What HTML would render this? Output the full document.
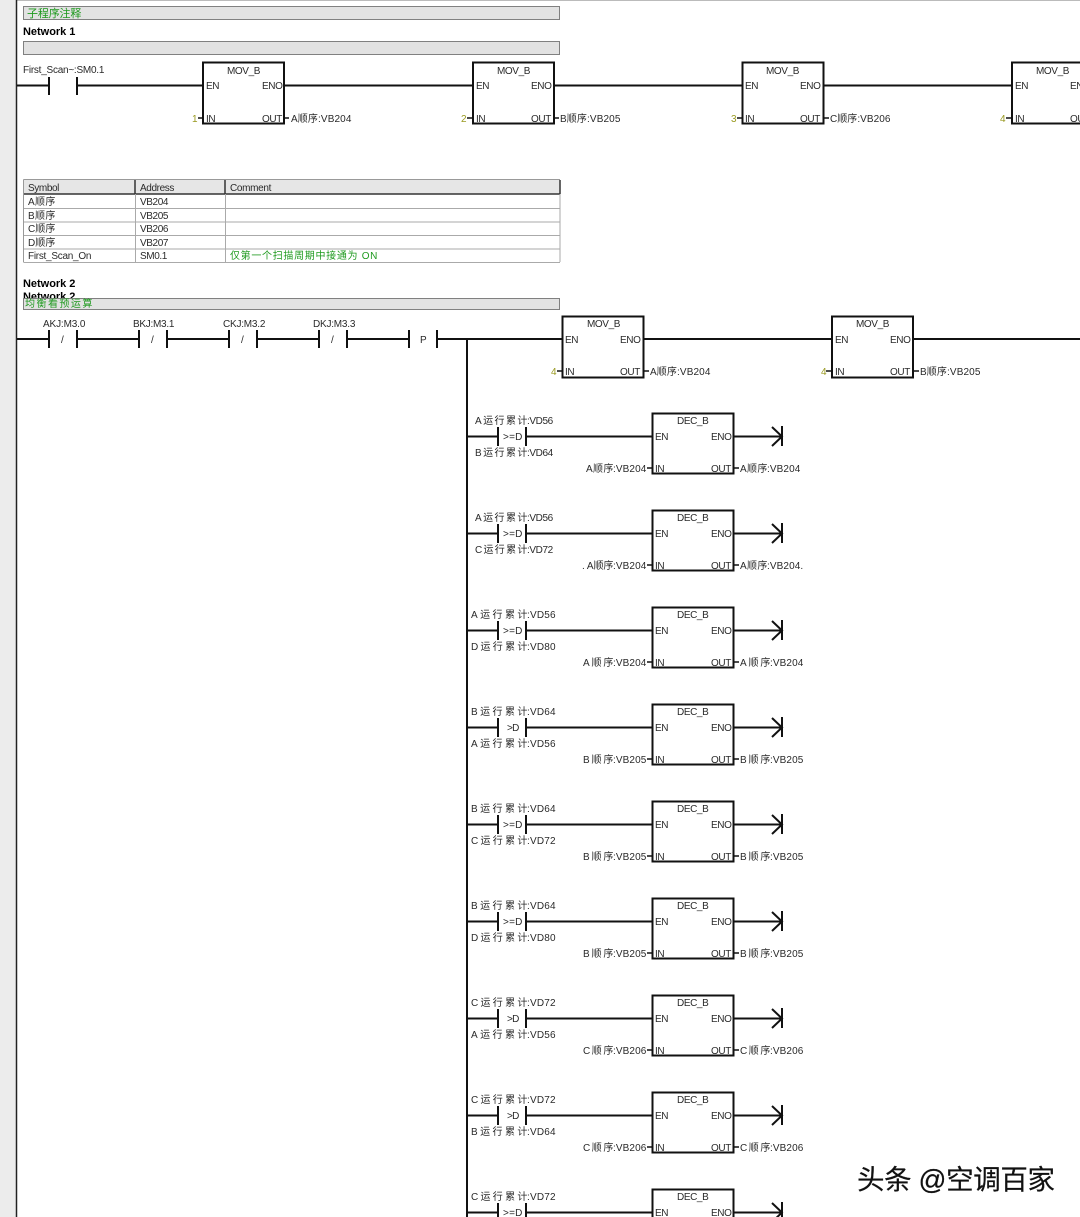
<!DOCTYPE html>
<html><head><meta charset="utf-8"><style>
html,body{margin:0;padding:0;background:#fff;width:1080px;height:1217px;overflow:hidden}
svg{display:block;filter:blur(.35px)}
text{font-family:"Liberation Sans","Noto Sans CJK SC",sans-serif;font-size:10px;fill:#2a2a2a;letter-spacing:-.4px}
text[x="471"] tspan+tspan{letter-spacing:.2px}
tspan[x="613"],tspan[x="767"],tspan[x="770"]{letter-spacing:.1px}
.g{fill:#1f9a1f}.o{fill:#99991f}.b{font-weight:bold;font-size:11px;fill:#000}
.l{stroke:#111;stroke-width:2;fill:none}.t{stroke:#111;stroke-width:1.5;fill:none}
.bar{fill:#e2e2e2;stroke:#808080;stroke-width:1}
.wm{font-size:27.5px;fill:#111;stroke:#111;stroke-width:.2px;letter-spacing:0}
</style></head><body>
<svg width="1080" height="1217" viewBox="0 0 1080 1217" xmlns="http://www.w3.org/2000/svg">
<rect x="0" y="0" width="16" height="1217" fill="#ececec"/>
<rect x="17" y="0" width="1063" height="1" fill="#bbb"/>
<path d="M16.5 0V1217" stroke="#222" stroke-width="1.5"/>

<rect class="bar" x="23.5" y="6.5" width="536" height="13"/>
<text class="g" x="27" y="17" style="font-size:11px" textLength="54">子程序注释</text>
<text class="b" x="23" y="35" textLength="52">Network 1</text>
<rect class="bar" x="23.5" y="41.5" width="536" height="13"/>

<!-- Rung 1 -->
<path class="l" d="M17 85.5H49M49 77V95M77 77V95M77 85.5H203M284 85.5H472M554 85.5H742M824 85.5H1011"/>
<text x="23" y="73" textLength="81">First_Scan~:SM0.1</text>
<rect class="l" x="203" y="62.5" width="81" height="61"/>
<rect class="l" x="473" y="62.5" width="81" height="61"/>
<rect class="l" x="742.500" y="62.5" width="81" height="61"/>
<rect class="l" x="1012" y="62.5" width="81" height="61"/>
<path class="t" d="M198 118H203M284 118H289M467 118H472M554 118H559M737 118H742M824 118H829M1006 118H1011"/>
<text x="227" y="74">MOV_B</text><text x="206" y="89">EN</text><text x="262" y="89">ENO</text><text x="206" y="122">IN</text><text x="262" y="122">OUT</text>
<text class="o" x="192" y="122">1</text><text x="291" y="122" textLength="60">A顺序:VB204</text>
<text x="497" y="74">MOV_B</text><text x="476" y="89">EN</text><text x="531" y="89">ENO</text><text x="476" y="122">IN</text><text x="531" y="122">OUT</text>
<text class="o" x="461" y="122">2</text><text x="560" y="122" textLength="60">B顺序:VB205</text>
<text x="766" y="74">MOV_B</text><text x="745" y="89">EN</text><text x="800" y="89">ENO</text><text x="745" y="122">IN</text><text x="800" y="122">OUT</text>
<text class="o" x="731" y="122">3</text><text x="830" y="122" textLength="60">C顺序:VB206</text>
<text x="1036" y="74">MOV_B</text><text x="1015" y="89">EN</text><text x="1070" y="89">ENO</text><text x="1015" y="122">IN</text><text x="1070" y="122">OUT</text>
<text class="o" x="1000" y="122">4</text>

<!-- Table -->
<rect x="24" y="180" width="536" height="14" fill="#e6e6e6"/>
<path d="M23.500 179.500H560M23.500 179.500V262.500" stroke="#999" fill="none"/>
<path d="M24 194H560M135 180V194M225 180V194M560 180V194" stroke="#333" stroke-width="1.500" fill="none"/>
<path d="M24 208.500H560M24 222H560M24 235.500H560M24 249H560M24 262.500H560M135.500 194V262M225.500 194V262M560 194V262" stroke="#aaa" fill="none"/>
<text x="28" y="191" textLength="31">Symbol</text><text x="140" y="191" textLength="34">Address</text><text x="230" y="191" textLength="41">Comment</text>
<text x="28" y="205" textLength="27">A顺序</text><text x="140" y="205">VB204</text>
<text x="28" y="219" textLength="27">B顺序</text><text x="140" y="219">VB205</text>
<text x="28" y="232" textLength="27">C顺序</text><text x="140" y="232">VB206</text>
<text x="28" y="246" textLength="27">D顺序</text><text x="140" y="246">VB207</text>
<text x="28" y="259" textLength="63">First_Scan_On</text><text x="140" y="259">SM0.1</text>
<text class="g" x="230" y="259" textLength="147">仅第一个扫描周期中接通为 ON</text>

<text class="b" x="23" y="287" textLength="52">Network 2</text>
<text class="b" x="23" y="300" textLength="52">Network 2</text>
<rect class="bar" x="23.5" y="298.5" width="536" height="11"/>
<text class="g" x="25" y="307" textLength="67">均衡看预运算</text>

<!-- Rung 2 -->
<path class="l" d="M17 339H49M49 330V348M77 330V348M77 339H139M139 330V348M167 330V348M167 339H229M229 330V348M257 330V348M257 339H319M319 330V348M347 330V348M347 339H409M409 330V348M437 330V348M437 339H562M644 339H832M914 339H1080M467 339V1217"/>
<text x="43" y="327" textLength="42">AKJ:M3.0</text><text x="133" y="327" textLength="41">BKJ:M3.1</text><text x="223" y="327" textLength="42">CKJ:M3.2</text><text x="313" y="327" textLength="42">DKJ:M3.3</text>
<text x="61" y="343">/</text><text x="151" y="343">/</text><text x="241" y="343">/</text><text x="331" y="343">/</text><text x="420" y="343">P</text>
<rect class="l" x="562.500" y="316.500" width="81" height="61"/>
<rect class="l" x="832" y="316.500" width="81" height="61"/>
<path class="t" d="M557 371H562M644 371H649M826 371H831M914 371H919"/>
<text x="587" y="327">MOV_B</text><text x="565" y="343">EN</text><text x="620" y="343">ENO</text><text x="565" y="375">IN</text><text x="620" y="375">OUT</text>
<text class="o" x="551" y="375">4</text><text x="650" y="375" textLength="60">A顺序:VB204</text>
<text x="856" y="327">MOV_B</text><text x="835" y="343">EN</text><text x="890" y="343">ENO</text><text x="835" y="375">IN</text><text x="890" y="375">OUT</text>
<text class="o" x="821" y="375">4</text><text x="920" y="375" textLength="60">B顺序:VB205</text>

<!-- DEC row wires -->
<path class="l" d="M467 436.500H498M498 427V446M526 427V446M526 436.500H652M734 436.500H782M772 427L782 436.500L772 446M782 426V446
M467 533.500H498M498 524V543M526 524V543M526 533.500H652M734 533.500H782M772 524L782 533.500L772 543M782 523V543
M467 630.500H498M498 621V640M526 621V640M526 630.500H652M734 630.500H782M772 621L782 630.500L772 640M782 620V640
M467 727.500H498M498 718V737M526 718V737M526 727.500H652M734 727.500H782M772 718L782 727.500L772 737M782 717V737
M467 824.500H498M498 815V834M526 815V834M526 824.500H652M734 824.500H782M772 815L782 824.500L772 834M782 814V834
M467 921.500H498M498 912V931M526 912V931M526 921.500H652M734 921.500H782M772 912L782 921.500L772 931M782 911V931
M467 1018.500H498M498 1009V1028M526 1009V1028M526 1018.500H652M734 1018.500H782M772 1009L782 1018.500L772 1028M782 1008V1028
M467 1115.500H498M498 1106V1125M526 1106V1125M526 1115.500H652M734 1115.500H782M772 1106L782 1115.500L772 1125M782 1105V1125
M467 1212.500H498M498 1203V1222M526 1203V1222M526 1212.500H652M734 1212.500H782M772 1203L782 1212.500L772 1222M782 1202V1222"/>
<g class="l">
<rect x="652.500" y="413.500" width="81" height="60"/><rect x="652.500" y="510.500" width="81" height="60"/><rect x="652.500" y="607.500" width="81" height="60"/><rect x="652.500" y="704.500" width="81" height="60"/><rect x="652.500" y="801.500" width="81" height="60"/><rect x="652.500" y="898.500" width="81" height="60"/><rect x="652.500" y="995.500" width="81" height="60"/><rect x="652.500" y="1092.500" width="81" height="60"/><rect x="652.500" y="1189.500" width="81" height="60"/>
</g>
<path class="t" d="M647 468H652M734 468H739M647 565H652M734 565H739M647 662H652M734 662H739M647 759H652M734 759H739M647 856H652M734 856H739M647 953H652M734 953H739M647 1050H652M734 1050H739M647 1147H652M734 1147H739"/>

<!-- DEC 1 -->
<text x="475" y="424"><tspan textLength="52">A运行累计</tspan><tspan x="527">:VD56</tspan></text><text x="503" y="440" textLength="19">&gt;=D</text><text x="475" y="456"><tspan textLength="52">B运行累计</tspan><tspan x="527">:VD64</tspan></text>
<text x="677" y="424">DEC_B</text><text x="655" y="440">EN</text><text x="711" y="440">ENO</text><text x="655" y="472">IN</text><text x="711" y="472">OUT</text>
<text x="586" y="472"><tspan textLength="27">A顺序</tspan><tspan x="613">:VB204</tspan></text><text x="740" y="472"><tspan textLength="27">A顺序</tspan><tspan x="767">:VB204</tspan></text>
<!-- DEC 2 -->
<text x="475" y="521"><tspan textLength="52">A运行累计</tspan><tspan x="527">:VD56</tspan></text><text x="503" y="537" textLength="19">&gt;=D</text><text x="475" y="553"><tspan textLength="52">C运行累计</tspan><tspan x="527">:VD72</tspan></text>
<text x="677" y="521">DEC_B</text><text x="655" y="537">EN</text><text x="711" y="537">ENO</text><text x="655" y="569">IN</text><text x="711" y="569">OUT</text>
<text x="582" y="569"><tspan textLength="31">. A顺序</tspan><tspan x="613">:VB204</tspan></text><text x="740" y="569"><tspan textLength="27">A顺序</tspan><tspan x="767">:VB204.</tspan></text>
<!-- DEC 3 -->
<text x="471" y="618"><tspan textLength="56">A运行累计</tspan><tspan x="527">:VD56</tspan></text><text x="503" y="634" textLength="19">&gt;=D</text><text x="471" y="650"><tspan textLength="56">D运行累计</tspan><tspan x="527">:VD80</tspan></text>
<text x="677" y="618">DEC_B</text><text x="655" y="634">EN</text><text x="711" y="634">ENO</text><text x="655" y="666">IN</text><text x="711" y="666">OUT</text>
<text x="583" y="666"><tspan textLength="30">A顺序</tspan><tspan x="613">:VB204</tspan></text><text x="740" y="666"><tspan textLength="30">A顺序</tspan><tspan x="770">:VB204</tspan></text>
<!-- DEC 4 -->
<text x="471" y="715"><tspan textLength="56">B运行累计</tspan><tspan x="527">:VD64</tspan></text><text x="507" y="731" textLength="12">&gt;D</text><text x="471" y="747"><tspan textLength="56">A运行累计</tspan><tspan x="527">:VD56</tspan></text>
<text x="677" y="715">DEC_B</text><text x="655" y="731">EN</text><text x="711" y="731">ENO</text><text x="655" y="763">IN</text><text x="711" y="763">OUT</text>
<text x="583" y="763"><tspan textLength="30">B顺序</tspan><tspan x="613">:VB205</tspan></text><text x="740" y="763"><tspan textLength="30">B顺序</tspan><tspan x="770">:VB205</tspan></text>
<!-- DEC 5 -->
<text x="471" y="812"><tspan textLength="56">B运行累计</tspan><tspan x="527">:VD64</tspan></text><text x="503" y="828" textLength="19">&gt;=D</text><text x="471" y="844"><tspan textLength="56">C运行累计</tspan><tspan x="527">:VD72</tspan></text>
<text x="677" y="812">DEC_B</text><text x="655" y="828">EN</text><text x="711" y="828">ENO</text><text x="655" y="860">IN</text><text x="711" y="860">OUT</text>
<text x="583" y="860"><tspan textLength="30">B顺序</tspan><tspan x="613">:VB205</tspan></text><text x="740" y="860"><tspan textLength="30">B顺序</tspan><tspan x="770">:VB205</tspan></text>
<!-- DEC 6 -->
<text x="471" y="909"><tspan textLength="56">B运行累计</tspan><tspan x="527">:VD64</tspan></text><text x="503" y="925" textLength="19">&gt;=D</text><text x="471" y="941"><tspan textLength="56">D运行累计</tspan><tspan x="527">:VD80</tspan></text>
<text x="677" y="909">DEC_B</text><text x="655" y="925">EN</text><text x="711" y="925">ENO</text><text x="655" y="957">IN</text><text x="711" y="957">OUT</text>
<text x="583" y="957"><tspan textLength="30">B顺序</tspan><tspan x="613">:VB205</tspan></text><text x="740" y="957"><tspan textLength="30">B顺序</tspan><tspan x="770">:VB205</tspan></text>
<!-- DEC 7 -->
<text x="471" y="1006"><tspan textLength="56">C运行累计</tspan><tspan x="527">:VD72</tspan></text><text x="507" y="1022" textLength="12">&gt;D</text><text x="471" y="1038"><tspan textLength="56">A运行累计</tspan><tspan x="527">:VD56</tspan></text>
<text x="677" y="1006">DEC_B</text><text x="655" y="1022">EN</text><text x="711" y="1022">ENO</text><text x="655" y="1054">IN</text><text x="711" y="1054">OUT</text>
<text x="583" y="1054"><tspan textLength="30">C顺序</tspan><tspan x="613">:VB206</tspan></text><text x="740" y="1054"><tspan textLength="30">C顺序</tspan><tspan x="770">:VB206</tspan></text>
<!-- DEC 8 -->
<text x="471" y="1103"><tspan textLength="56">C运行累计</tspan><tspan x="527">:VD72</tspan></text><text x="507" y="1119" textLength="12">&gt;D</text><text x="471" y="1135"><tspan textLength="56">B运行累计</tspan><tspan x="527">:VD64</tspan></text>
<text x="677" y="1103">DEC_B</text><text x="655" y="1119">EN</text><text x="711" y="1119">ENO</text><text x="655" y="1151">IN</text><text x="711" y="1151">OUT</text>
<text x="583" y="1151"><tspan textLength="30">C顺序</tspan><tspan x="613">:VB206</tspan></text><text x="740" y="1151"><tspan textLength="30">C顺序</tspan><tspan x="770">:VB206</tspan></text>
<!-- DEC 9 -->
<text x="471" y="1200"><tspan textLength="56">C运行累计</tspan><tspan x="527">:VD72</tspan></text><text x="503" y="1216" textLength="19">&gt;=D</text>
<text x="677" y="1200">DEC_B</text><text x="655" y="1216">EN</text><text x="711" y="1216">ENO</text>

<text class="wm" x="857" y="1189" textLength="198">头条 @空调百家</text>
</svg>
</body></html>
